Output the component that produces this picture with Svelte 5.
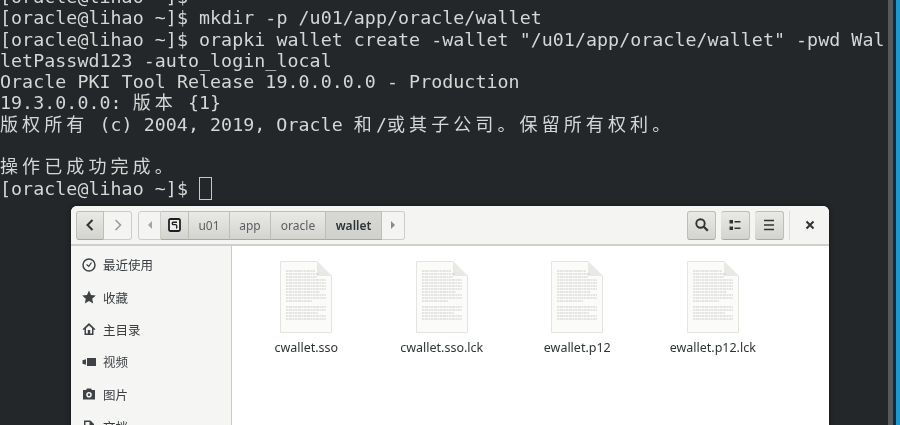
<script>
	const termLines = [
		'[oracle@lihao ~]$',
		'[oracle@lihao ~]$ mkdir -p /u01/app/oracle/wallet',
		'[oracle@lihao ~]$ orapki wallet create -wallet "/u01/app/oracle/wallet" -pwd Wal',
		'letPasswd123 -auto_login_local',
		'Oracle PKI Tool Release 19.0.0.0.0 - Production',
		'19.3.0.0.0: 版本 {1}',
		'版权所有 (c) 2004, 2019, Oracle 和/或其子公司。保留所有权利。',
		' ',
		'操作已成功完成。'
	];

	// odd parts of the split are the CJK runs, they take two cells per char
	const segments = (line) => line.split(/([\u3000-\u9fff]+)/);

	const crumbs = [
		{ name: 'u01', width: 41 },
		{ name: 'app', width: 41 },
		{ name: 'oracle', width: 55 }
	];
	const places = ['最近使用', '收藏', '主目录', '视频', '图片', '文档'];
	const files = ['cwallet.sso', 'cwallet.sso.lck', 'ewallet.p12', 'ewallet.p12.lck'];

	// fake text on the document thumbnail: [y, right end]
	const pageLines = [
		[10, 29], [13, 33], [16, 31], [19, 40], [22, 40], [25, 40], [28, 40], [31, 34],
		[34, 40], [37, 40], [40, 26], [46, 40], [49, 40], [52, 32], [55, 40], [58, 40]
	];
</script>

<div class="desktop">
	<div class="terminal">
		<div class="output">
			{#each termLines as line}
				<div class="line">{#each segments(line) as part, i}{#if i % 2}<span class="cjk">{part}</span>{:else}{part}{/if}{/each}</div>
			{/each}
			<div class="line">[oracle@lihao ~]$ <span class="cursor"></span></div>
		</div>
		<div class="scrollbar"></div>
	</div>
	<div class="wallpaper"></div>

	<div class="window">
		<header>
			<div class="group nav">
				<button class="btn">
					<svg width="12" height="14" viewBox="0 0 12 14"><path d="M8.5 2 3.5 7l5 5" fill="none" stroke="#2e3436" stroke-width="2" /></svg>
				</button>
				<button class="btn off">
					<svg width="12" height="14" viewBox="0 0 12 14"><path d="M3.5 2l5 5-5 5" fill="none" stroke="#9a9c9a" stroke-width="1.6" /></svg>
				</button>
			</div>
			<div class="group path">
				<button class="btn off arrow">
					<svg width="8" height="10" viewBox="0 0 8 10"><path d="M6 1v8L2 5z" fill="#a4a6a4" /></svg>
				</button>
				<button class="btn home">
					<svg width="13" height="14" viewBox="0 0 13 14">
						<rect x="1" y="1" width="11" height="12" rx="1.5" fill="#eee" stroke="#1c1f20" stroke-width="1.8" />
						<path d="M9 4.2H5.2C4 4.2 4 6.6 5.4 6.6H7.6C9 6.6 9.2 9.8 8.2 10.4" fill="none" stroke="#1c1f20" stroke-width="1.4" />
					</svg>
				</button>
				{#each crumbs as crumb}
					<button class="btn crumb" style="width: {crumb.width}px">{crumb.name}</button>
				{/each}
				<button class="btn crumb current">wallet</button>
				<button class="btn off arrow">
					<svg width="8" height="10" viewBox="0 0 8 10"><path d="M2 1v8l4-4z" fill="#8a8c8a" /></svg>
				</button>
			</div>
			<div class="tools">
				<button class="btn tool">
					<svg width="16" height="16" viewBox="0 0 16 16"><circle cx="6.5" cy="6.5" r="4.2" fill="none" stroke="#2e3436" stroke-width="1.9" /><path d="M9.8 9.8l4 4" stroke="#2e3436" stroke-width="2.2" /></svg>
				</button>
				<button class="btn tool">
					<svg width="16" height="16" viewBox="0 0 16 16"><path d="M2.500 3h3.500v3.500H2.500zM2.500 9.500h3.500v3.500H2.500z" fill="#2e3436" /><path d="M7.500 4.800h6M7.500 11.200h6" stroke="#2e3436" stroke-width="1.600" /></svg>
				</button>
				<button class="btn tool">
					<svg width="16" height="16" viewBox="0 0 16 16"><path d="M3 3.500h10M3 8h10M3 12.500h10" stroke="#2e3436" stroke-width="1.700" /></svg>
				</button>
				<span class="sep"></span>
				<button class="close" aria-label="close">
					<svg width="10" height="10" viewBox="0 0 10 10"><path d="M1.500 1.500l7 7M8.500 1.500l-7 7" stroke="#2e3436" stroke-width="2" /></svg>
				</button>
			</div>
		</header>

		<div class="body">
			<aside>
				{#each places as place, i}
					<div class="place">
						<svg width="16" height="16" viewBox="0 0 16 16" fill="#3e4244">
							{#if i === 0}
								<circle cx="8" cy="8" r="6" fill="none" stroke="#3e4244" stroke-width="1.500" />
								<path d="M5.500 7.500 7.800 9.300 10.500 5.500" fill="none" stroke="#3e4244" stroke-width="1.200" />
							{:else if i === 1}
								<path d="M8 1.500l2 4.500 4.800.5-3.600 3.200 1 4.800L8 12.100 3.800 14.500l1-4.800L1.200 6.500 6 6z" />
							{:else if i === 2}
								<path d="M8 2 1.500 8.200l1 .9L3.500 8.200V14h9V8.200l1 .9 1-.9zM5 12.500V7.200L8 4.400l3 2.800v5.300H9.200V9H6.800v3.500z" fill-rule="evenodd" />
							{:else if i === 3}
								<path d="M6 4h9v8H6zM1.500 6.200 5 5.200v5.600l-3.500-1z" />
							{:else if i === 4}
								<path d="M2 4h3l1-1.500h4L11 4h3v9.500H2zM8 6a2.800 2.800 0 1 0 0 5.600A2.800 2.800 0 0 0 8 6zm0 1.500a1.300 1.300 0 1 1 0 2.600 1.300 1.300 0 0 1 0-2.600z" fill-rule="evenodd" />
							{:else}
								<path d="M3 1.500h6.500L13 5v9.500H3zM4.500 3v10h7V6H8.500V3z" fill-rule="evenodd" />
							{/if}
						</svg>
						<span>{place}</span>
					</div>
				{/each}
			</aside>
			<main>
				{#each files as file}
					<div class="file">
						<svg width="52" height="72" viewBox="0 0 52 72">
							<path d="M.5.500H37L51.500 15V71.500H.5z" fill="#fbfbfa" stroke="#e4e4e1" />
							<path d="M37 .5V15H51.500z" fill="#e8e8e5" />
							{#each pageLines as [y, end]}
								<path d={`M6 ${y}H${end + 6}`} stroke="#cfcfcd" stroke-width="1" stroke-dasharray="2 .5 4 .5 1.500 .5" />
							{/each}
						</svg>
						<span>{file}</span>
					</div>
				{/each}
			</main>
		</div>
	</div>
</div>

<style>
	:global(body) {
		background: #232729;
		overflow: hidden;
	}

	.desktop {
		position: relative;
		display: flex;
		width: 900px;
		height: 425px;
		overflow: hidden;
	}

	.terminal {
		display: flex;
		width: 896px;
		height: 100%;
		background: #232729;
	}

	.output {
		flex: 1;
		margin-top: -14px;
		color: #d3d7d5;
		font-family: 'DejaVu Sans Mono', monospace;
		font-size: 18.3px;
		letter-spacing: 0.05px;
		line-height: 21.25px;
		filter: blur(0.35px);
	}

	.line {
		height: 21.25px;
		white-space: pre;
	}

	.cjk {
		font-family: 'Noto Sans CJK SC', sans-serif;
		font-size: 18px;
		line-height: 0;
		letter-spacing: 4.1px;
	}

	.cursor {
		display: inline-block;
		box-sizing: border-box;
		width: 13px;
		height: 23px;
		vertical-align: -5px;
		border: 1px solid #c4c8c6;
	}

	.scrollbar {
		width: 5px;
		margin-right: 3px;
		background: #555a5d;
	}

	.wallpaper {
		flex: 1;
		background: #1699d4;
	}

	.window {
		position: absolute;
		left: 71px;
		top: 206px;
		width: 758px;
		height: 240px;
		border-radius: 6px 6px 0 0;
		background: #fff;
		box-shadow: 0 0 5px rgba(0, 0, 0, 0.45);
		font-family: 'Noto Sans', 'Noto Sans CJK SC', sans-serif;
		overflow: hidden;
		filter: blur(0.3px);
	}

	header {
		display: flex;
		align-items: center;
		box-sizing: border-box;
		height: 40px;
		padding: 0 0 0 5px;
		background: #f4f4f2;
		border-bottom: 2px solid #cfcfcb;
	}

	.group {
		display: flex;
		height: 29px;
	}

	.nav {
		width: 56px;
	}

	.path {
		margin-left: 6px;
	}

	.btn {
		display: flex;
		align-items: center;
		justify-content: center;
		box-sizing: border-box;
		height: 29px;
		padding: 0;
		border: 1px solid #bdbdb9;
		border-bottom-color: #a8a8a4;
		background: linear-gradient(#e9e9e6, #d3d3cf);
		color: #5c6062;
		font-family: inherit;
		font-size: 12px;
	}

	.btn + .btn {
		border-left: none;
	}

	.group .btn:first-child {
		border-radius: 3px 0 0 3px;
	}

	.group .btn:last-child {
		border-radius: 0 3px 3px 0;
	}

	.btn.off {
		background: #f4f4f2;
		border-color: #cdcdc9;
	}

	.nav .btn {
		width: 28px;
	}

	.arrow {
		width: 23px;
	}

	.home {
		width: 28px;
	}

	.current {
		width: 56px;
		background: linear-gradient(#d8d8d5, #d0d0cc);
		color: #2e3436;
		font-weight: 600;
	}

	.tools {
		display: flex;
		align-items: center;
		gap: 5px;
		margin-left: auto;
		padding-right: 5px;
	}

	.tool {
		width: 29px;
		border-radius: 3px;
	}

	.sep {
		width: 1px;
		height: 29px;
		background: #dcdcd9;
	}

	.close {
		display: flex;
		align-items: center;
		justify-content: center;
		width: 29px;
		height: 29px;
		padding: 0;
		border: none;
		background: none;
	}

	.body {
		display: flex;
		height: 200px;
	}

	aside {
		box-sizing: border-box;
		width: 161px;
		padding-top: 2.500px;
		background: #f5f5f4;
		border-right: 1px solid #c9c9c5;
	}

	.place {
		display: flex;
		align-items: center;
		gap: 6px;
		height: 32.4px;
		padding-left: 10px;
		color: #3a3e40;
		font-family: 'Noto Sans CJK SC', sans-serif;
		font-size: 12.5px;
	}

	main {
		display: grid;
		grid-template-columns: repeat(4, 135.5px);
		align-content: start;
		flex: 1;
		padding: 15px 0 0 6.500px;
	}

	.file {
		display: flex;
		flex-direction: column;
		align-items: center;
		gap: 6px;
		color: #2e3436;
		font-size: 12.5px;
	}
</style>
